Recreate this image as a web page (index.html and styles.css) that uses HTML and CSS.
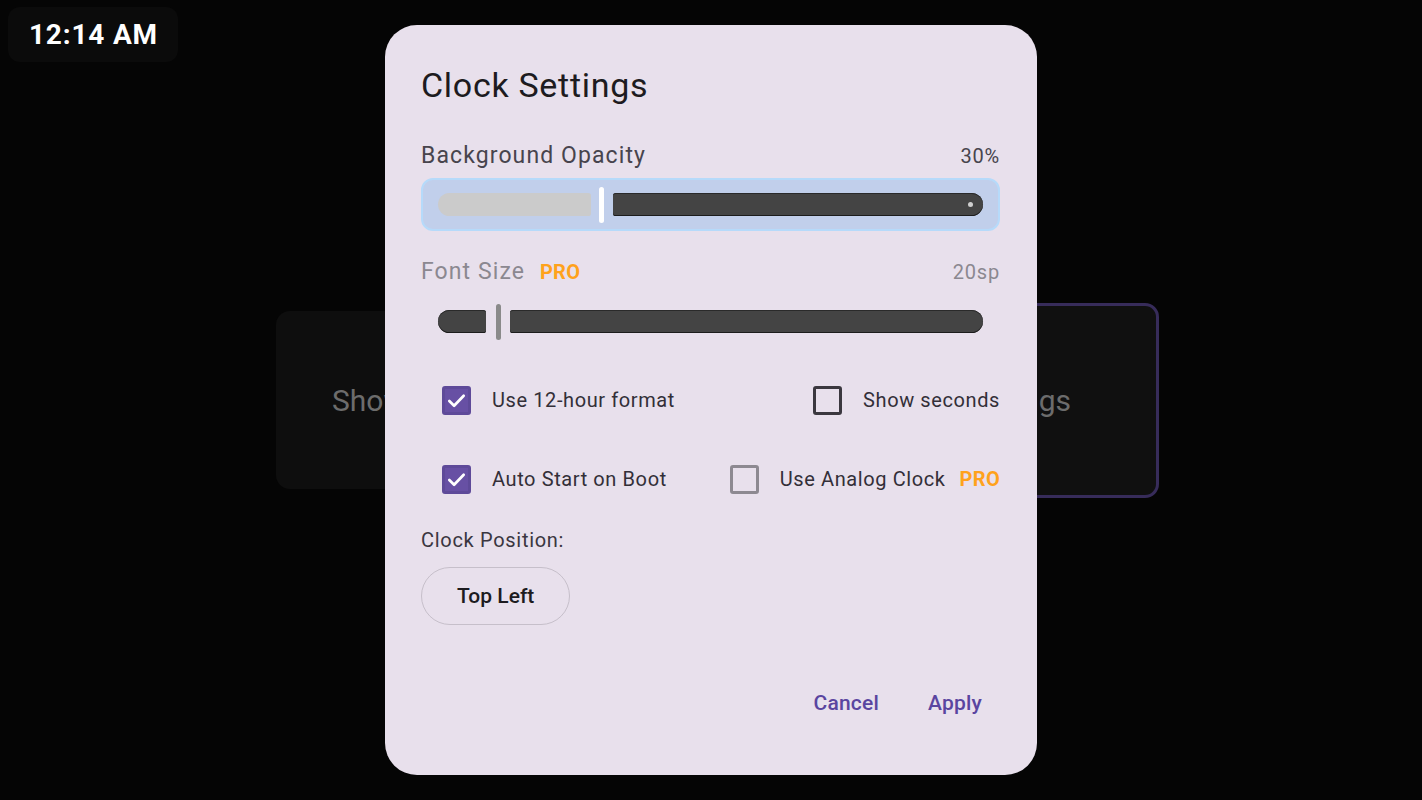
FILE: index.html
```html
<!DOCTYPE html>
<html lang="en">
<head>
    <meta charset="UTF-8">
    <meta name="viewport" content="width=device-width, initial-scale=1.0">
    <title>Clock Settings</title>
    <link rel="stylesheet" href="styles.css">
</head>
<body>
    <div class="clock-chip">12:14 AM</div>

    <main class="home">
        <div class="home-card">Show Clock Overlay</div>
        <div class="home-card focused">Clock Settings</div>
    </main>

    <div class="scrim">
        <div class="dialog">
            <h1>Clock Settings</h1>

            <div class="setting">
                <div class="setting-head">
                    <span class="setting-label">Background Opacity</span>
                    <span class="setting-value">30%</span>
                </div>
                <div class="slider active">
                    <div class="track filled light" style="width: 153px"></div>
                    <div class="thumb white"></div>
                    <div class="track rest"><span class="stop-dot"></span></div>
                </div>
            </div>

            <div class="setting font-size">
                <div class="setting-head">
                    <span class="setting-label disabled">Font Size <span class="pro">PRO</span></span>
                    <span class="setting-value disabled">20sp</span>
                </div>
                <div class="slider">
                    <div class="track filled" style="width: 48px"></div>
                    <div class="thumb gray"></div>
                    <div class="track rest"></div>
                </div>
            </div>

            <div class="check-rows">
                <div class="check-row">
                    <label class="check">
                        <span class="box checked">
                            <svg viewBox="0 0 24 24" width="25" height="25"><path d="M4.5 12.5l5 5L19.5 7" fill="none" stroke="#fff" stroke-width="2.8" stroke-linecap="round" stroke-linejoin="round"/></svg>
                        </span>
                        Use 12-hour format
                    </label>
                    <label class="check">
                        <span class="box"></span>
                        Show seconds
                    </label>
                </div>
                <div class="check-row">
                    <label class="check">
                        <span class="box checked">
                            <svg viewBox="0 0 24 24" width="25" height="25"><path d="M4.5 12.5l5 5L19.5 7" fill="none" stroke="#fff" stroke-width="2.8" stroke-linecap="round" stroke-linejoin="round"/></svg>
                        </span>
                        Auto Start on Boot
                    </label>
                    <label class="check">
                        <span class="box off"></span>
                        Use Analog Clock <span class="pro">PRO</span>
                    </label>
                </div>
            </div>

            <div class="position-label">Clock Position:</div>
            <div class="position-row">
                <button class="outline-btn">Top Left</button>
            </div>

            <div class="actions">
                <button class="text-btn">Cancel</button>
                <button class="text-btn">Apply</button>
            </div>
        </div>
    </div>
</body>
</html>
```

FILE: styles.css
```css
* {
    margin: 0;
    padding: 0;
    box-sizing: border-box;
}

body {
    font-family: Roboto, 'Noto Sans', sans-serif;
    background: #050505;
    width: 1422px;
    height: 800px;
    overflow: hidden;
}

.clock-chip {
    position: absolute;
    top: 7px;
    left: 8px;
    height: 55px;
    padding: 0 20px 0 21px;
    display: flex;
    align-items: center;
    background: #0b0b0b;
    border-radius: 12px;
    color: #fff;
    font-size: 28px;
    font-weight: 700;
    letter-spacing: 0.8px;
}

/* launcher cards behind the dialog */
.home {
    height: 800px;
    display: flex;
    align-items: center;
    gap: 20px;
    padding-left: 276px;
}

.home-card {
    width: 420px;
    height: 178px;
    background: #0e0e0e;
    border-radius: 14px;
    display: flex;
    align-items: center;
    padding-left: 56px;
    color: #6c6c6c;
    font-size: 30px;
}

.home-card.focused {
    width: 443px;
    height: 195px;
    border: 3px solid #372c5a;
    background: #101010;
    justify-content: flex-end;
    padding: 0 85px 0 0;
}

/* dialog */
.scrim {
    position: fixed;
    inset: 0;
    display: flex;
    justify-content: center;
    align-items: center;
}

.dialog {
    width: 652px;
    height: 750px;
    background: #e8e0ec;
    border-radius: 32px;
    padding: 39px 37px 48px 36px;
    display: flex;
    flex-direction: column;
}

h1 {
    font-size: 34px;
    line-height: 42px;
    font-weight: 400;
    letter-spacing: 0.7px;
    color: #1d1b20;
}

.setting {
    margin-top: 36px;
}

.setting.font-size {
    margin-top: 27px;
}

.setting-head {
    display: flex;
    justify-content: space-between;
    align-items: baseline;
    line-height: 28px;
}

.setting-label {
    font-size: 23px;
    letter-spacing: 1.1px;
    color: #47444d;
}

.setting-value {
    font-size: 20px;
    letter-spacing: 0.8px;
    color: #47444d;
}

.disabled {
    color: #8b8890;
}

.pro {
    color: #ffa21c;
    font-weight: 700;
    font-size: 20px;
    letter-spacing: 0.3px;
    margin-left: 10px;
}

.setting-label .pro {
    margin-left: 8px;
}

.slider {
    margin-top: 8px;
    height: 53px;
    border: 2px solid transparent;
    border-radius: 12px;
    padding: 0 15px;
    display: flex;
    align-items: center;
}

.font-size .slider {
    margin-top: 9px;
}

.slider.active {
    background: #c1cfeb;
    border-color: #b6dafa;
}

.track {
    height: 23px;
    background: #444;
    box-shadow: inset 0 -1px 0 #1c1c1c, inset 0 1px 0 #2a2a2a;
}

.track.filled {
    border-radius: 12px 3px 3px 12px;
}

.track.light {
    background: #cbcbcb;
    box-shadow: none;
}

.track.rest {
    flex: 1;
    border-radius: 3px 12px 12px 3px;
    display: flex;
    align-items: center;
    justify-content: flex-end;
    padding-right: 10px;
}

.stop-dot {
    width: 5px;
    height: 5px;
    border-radius: 50%;
    background: #cfcfcf;
}

.thumb {
    width: 5px;
    height: 36px;
    border-radius: 3px;
    margin: 0 9px 0 8px;
}

.thumb.white {
    background: #fff;
}

.thumb.gray {
    background: #8a8a8a;
    margin: 0 9px 0 10px;
}

/* checkboxes */
.check-rows {
    margin-top: 28px;
    display: flex;
    flex-direction: column;
    gap: 31px;
}

.check-row {
    height: 48px;
    display: flex;
    justify-content: space-between;
    align-items: center;
    padding-left: 21px;
}

.check {
    display: flex;
    align-items: center;
    font-size: 20px;
    letter-spacing: 0.6px;
    color: #332f38;
}

.box {
    width: 29px;
    height: 29px;
    border: 3px solid #3b383f;
    border-radius: 3px;
    margin-right: 21px;
    display: flex;
    align-items: center;
    justify-content: center;
}

.box.checked {
    background: #6750a4;
    border-color: #5e4a99;
}

.box.off {
    border-color: #8d8991;
}

.check .pro {
    margin-left: 14px;
}

.position-label {
    margin-top: 23px;
    font-size: 20px;
    line-height: 28px;
    letter-spacing: 0.7px;
    color: #3a3640;
}

.position-row {
    margin-top: 13px;
    display: flex;
}

button {
    font-family: Roboto, 'Noto Sans', sans-serif;
    background: none;
    border: none;
    cursor: pointer;
}

.outline-btn {
    height: 58px;
    padding: 0 35px;
    border: 1px solid #c6bfca;
    border-radius: 29px;
    font-size: 21px;
    font-weight: 500;
    letter-spacing: 0;
    color: #1d1b20;
}

.actions {
    margin-top: auto;
    display: flex;
    justify-content: flex-end;
    gap: 11px;
}

.text-btn {
    height: 48px;
    padding: 0 19px;
    font-size: 21px;
    font-weight: 500;
    letter-spacing: 0.2px;
    color: #5a45a0;
}

.text-btn:last-child {
    padding-right: 18px;
}
```
